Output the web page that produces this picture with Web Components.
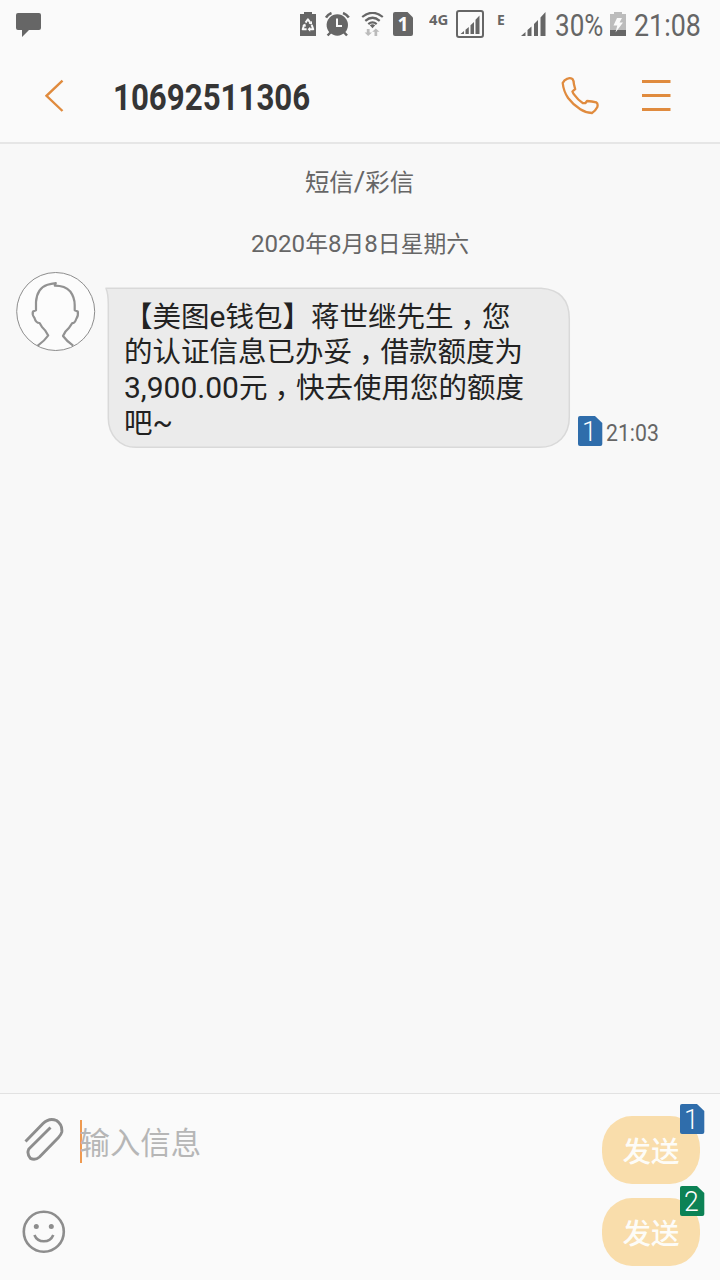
<!DOCTYPE html>
<html lang="zh-CN"><head><meta charset="utf-8"><title>短信</title>
<style>
html,body{margin:0;height:100%;background:#f8f8f8}
body{font-family:Roboto,"Noto Sans CJK SC",sans-serif;overflow:hidden}
</style></head><body>
<message-screen></message-screen>
<script>
const define=(name,html)=>customElements.define(name,class extends HTMLElement{
  constructor(){super();const t=document.createElement('template');t.innerHTML=html;
    this.attachShadow({mode:'open'}).append(t.content.cloneNode(true));}
});

/* Narrow lettering: scales its slot horizontally inside a fixed-width box. */
define('narrow-text',`<style>:host{display:block;width:var(--w);white-space:nowrap;line-height:1}
span{display:inline-block;transform:scaleX(var(--k));transform-origin:0 50%}</style><span><slot></slot></span>`);

/* SIM card badge with a clipped corner. */
define('sim-badge',`<style>:host{display:grid;width:25px;height:30px;color:#fdfdfd;font:350 28px/31px Roboto,sans-serif}
svg,span{grid-area:1/1}path{fill:var(--sim,#2f6dab)}span{text-align:center;transform:translateX(-1px) scaleX(.95)}</style>
<svg width="25" height="30"><path d="M2 0H17L24.3 7V28Q24.3 30 22.3 30H2Q0 30 0 28V2Q0 0 2 0Z"/></svg><span><slot></slot></span>`);

define('status-bar',`<style>
:host{display:flex;height:50px;box-sizing:border-box;padding:0 0 0 16px;color:#666;align-items:flex-start}
svg{display:block;flex:none;fill:#666}
.talk{margin:13px 258px 0 0}
.small{font:bold 14.5px/14px "Open Sans",sans-serif;margin-top:13px}
narrow-text{font-size:31px;margin-top:10px}
#one{width:20px;margin:12px 0 0 -20px;text-align:center;color:#fafafa;font:bold 19.5px/24px "Open Sans",sans-serif}
</style>
<svg class="talk" width="25" height="25" viewBox="0 0 25 25"><path d="M2 0H23Q25 0 25 2V15Q25 17 23 17H13L6 24V17H2Q0 17 0 15V2Q0 0 2 0Z"/></svg>
<svg style="margin:12px 0 0 1px" width="16" height="24" viewBox="0 0 16 24"><path d="M4 0H12V2H16V24H0V2H4Z"/><path d="M5.6 10.6L7.9 7.3L10.2 10.6M4.2 12.9L2.7 17.3H6.6M11.7 12.9L13.2 17.3H9.6" fill="none" stroke="#fafafa" stroke-width="2" stroke-linejoin="round"/><path d="M8.6 11.8L12 8.9V12.6ZM10.2 14.8V19.7L7.6 17.3ZM2.3 13.6L5.2 11.6L6.1 14.8Z" fill="#fafafa"/></svg>
<svg style="margin:12px 0 0 9px" width="25" height="25" viewBox="0 0 25 25"><circle cx="12.3" cy="13" r="10.7"/><path d="M1 5.5Q3 2.3 6.5 1M18 1Q21.5 2.3 23.8 5.5M6 20L2.6 23.5M18.7 20L22 23.5" fill="none" stroke="#666" stroke-width="2.5"/><path d="M12 6.5V14H17" fill="none" stroke="#fafafa" stroke-width="2"/></svg>
<svg style="margin:12px 0 0 11px" width="23" height="25" viewBox="0 0 23 25"><g fill="none" stroke="#666" stroke-width="2.2"><path d="M1.2 5Q11.5-3.4 21.8 5M4.3 8.8Q11.5 2.7 18.7 8.8M7.3 12.2Q11.5 8.6 15.7 12.2"/></g><path d="M8.8 13.2Q11.5 11.3 14.2 13.2L11.5 16.2Z"/><path fill="#bbb" d="M5.8 17H8.6V20.6H11L7.2 24L3.6 20.6H5.8ZM13.5 24H16.2V19.8H18.5L14.8 16.4L11.2 19.8H13.5Z"/></svg>
<svg style="margin:12px 0 0 9px" width="20" height="24" viewBox="0 0 20 24"><path d="M2 0H14.5L20 5.5V22Q20 24 18 24H2Q0 24 0 22V2Q0 0 2 0Z"/></svg>
<b id="one">1</b>
<narrow-text class="small" style="--w:28px;--k:1.03;margin-left:16px">4G</narrow-text>
<svg style="margin:10px 0 0 -1px" width="28" height="28" viewBox="0 0 28 28"><rect x="1" y="1" width="26" height="26" rx="2" fill="none" stroke="#666" stroke-width="2"/><path d="M4.5 24L8 21V24ZM9.5 19.8L12.8 17V24H9.5ZM14.5 15.2L18 12V24H14.5ZM19.5 9.8L23.5 5.5V24H19.5Z"/></svg>
<narrow-text class="small" style="--w:23px;--k:.96;margin-left:13px">E</narrow-text>
<svg style="margin:12px 0 0 1px" width="25" height="24" viewBox="0 0 25 24"><path d="M0 24L4.5 20V24ZM6.5 18L10.5 14.5V24H6.5ZM13 12L17 8V24H13ZM19.5 5.5L24.5 0V24H19.5Z"/></svg>
<narrow-text style="--w:50px;--k:.84;margin-left:9px">30%</narrow-text>
<svg style="margin:12px 0 0 5px" width="16" height="24" viewBox="0 0 16 24"><path fill="#bcbcbc" d="M4 0H12V2H16V18H0V2H4Z"/><path d="M0 18H16V24H0Z"/><path fill="#fafafa" d="M7 6H12L9.5 10.5H13L5.5 20.5L7.3 13.5H3.5Z"/></svg>
<narrow-text style="--w:68px;--k:.865;margin-left:8px">21:08</narrow-text>`);

define('title-bar',`<style>
:host{display:flex;box-sizing:border-box;height:94px;border-bottom:2px solid #e6e6e6;align-items:flex-start}
svg{display:block;fill:none;stroke:#e08b3e;flex:none}
narrow-text{font-size:36px;font-weight:700;color:#353535;margin:30px 0 0 48px;flex:1}
</style>
<svg style="margin:29px 0 0 45px" width="20" height="34" viewBox="0 0 20 34"><path stroke-width="2.4" d="M17.5 1.7L1.5 16.8L17.5 32"/></svg>
<narrow-text style="--w:200px;--k:.868">10692511306</narrow-text>
<svg style="margin:27px 43px 0 0" width="38" height="38" viewBox="0 0 38 38"><path stroke-width="2.3" stroke-linejoin="round" d="M6.5 1.7Q9 .6 11.5 2Q12.7 3.5 12.9 7L14.2 12.2Q12.5 13.5 11.4 14.5Q12 16.5 13.4 17.8Q17 23 22 26.2L24.5 26L26 24Q31 24.2 35.2 25.4Q37.4 26.5 36.2 30.3Q34.5 33.8 31 36Q24 35.5 19.3 32.3Q12 27.6 7.1 21Q2.6 14.5 1.7 6Q3 3 6.5 1.7Z"/></svg>
<svg style="margin:30px 49px 0 0" width="29" height="32" viewBox="0 0 29 32"><path stroke-width="3" d="M0 1.5H28.5M0 15.5H28.5M0 29.5H28.5"/></svg>`);

define('contact-avatar',`<style>:host{display:block;width:80px;height:80px}svg{display:block}</style>
<svg width="80" height="80" viewBox="0 0 80 80"><circle cx="39.7" cy="39.5" r="39" fill="#fcfcfc" stroke="#8d8d8d"/><path fill="none" stroke="#929292" stroke-width="2.2" stroke-linejoin="round" d="M21.5 73.8Q28.5 69 32.2 63.5Q30 58.5 26 55L23.6 51Q19.8 51 18.5 46Q15.8 42.5 17 39.5L20 38.2V30Q21 16 31.5 12.7Q35 11.7 39.8 11.1L38.8 13.7Q49 13.7 54.3 19.5Q58.7 25.5 58.7 33V38.2L61.8 39.5Q62.6 43.5 60.2 47Q59 51.2 56.2 51.2L53 55.8Q49 59 47 64Q51 69.5 57.2 73.6"/></svg>`);

define('message-bubble',`<style>:host{display:grid;width:466px;height:162px;color:#222}
svg,div{grid-area:1/1}
div{padding:12.5px 0 0 19px;font:28.5px/35.5px Roboto,"Noto Sans CJK SC",sans-serif;white-space:nowrap}
::slotted(p){margin:0;height:35.5px}
</style><svg width="466" height="162" viewBox="0 0 466 162"><path fill="#ebebeb" stroke="#d9d9d9" stroke-width="1.5" stroke-linejoin="round" d="M1 1.2H436Q464.3 3 464.3 32V130C464.3 148 453 160.3 434 160.3H31C14 160.3 3.3 147 3.3 131V17Q3.3 7 1 1.2Z"/></svg><div><slot></slot></div>`);

define('send-button',`<style>:host{display:grid;width:103px;height:82px;grid-template-columns:1fr}
button,sim-badge{grid-area:1/1}
button{border:0;padding:0;width:98px;height:68px;margin-top:12px;border-radius:30px/32px;background:#f9ddab;color:#fdfcf8;font:500 28.5px/68px "Noto Sans CJK SC",sans-serif}
sim-badge{justify-self:end;z-index:1}
</style><button>发送</button><sim-badge><slot></slot></sim-badge>`);

define('compose-bar',`<style>
:host{display:flex;box-sizing:border-box;height:187px;border-top:1px solid #e2e2e2;background:#fafafa;padding-top:10px}
svg{display:block;fill:none;stroke:#8d8d8d}
.tools{width:80px}.field{flex:1;display:flex;align-items:center;height:43px;margin-top:16px;border-left:2px solid #ef9a50;color:#b6b6b6;font:400 30.4px/43px "Noto Sans CJK SC",sans-serif}
.field span{margin-left:-2.5px}
.send{margin-right:15px}
</style>
<div class="tools"><svg style="margin:12px 0 0 22px" width="44" height="46" viewBox="0 0 44 46"><path stroke-width="2.9" d="M3.5 25.5L21 7.5Q27.3 1.3 34.5 4.5Q40.5 8.5 39.8 16Q39 19 36.5 21.5L17.5 41Q13 44.8 8.5 42.4Q4.5 38 6.8 33L28.5 11.5"/></svg>
<svg style="margin:48px 0 0 22px" width="44" height="44" viewBox="0 0 44 44"><circle cx="21.8" cy="21.8" r="20" stroke-width="2.6"/><g fill="#8d8d8d" stroke="none"><circle cx="14.3" cy="16.5" r="2.5"/><circle cx="29.3" cy="16.5" r="2.5"/></g><path stroke-width="2.6" d="M12.4 25Q15 31.3 21.8 31.3Q28.6 31.3 31.3 25"/></svg></div>
<div class="field"><span>输入信息</span></div>
<div class="send"><send-button>1</send-button><send-button style="--sim:#0c8255">2</send-button></div>`);

define('message-screen',`<style>
:host{display:flex;flex-direction:column;width:720px;height:1280px;background:#f8f8f8}
header{background:#fafafa;height:144px}
main{flex:1}
.note{color:#666;text-align:center;white-space:nowrap}
.kind{font-size:24.4px;line-height:36px;padding-top:21px;margin-right:1px}
.date{font-size:22.8px;line-height:34px;margin-top:26px}
.date b{font-weight:400;font-size:24.1px}
.kind b{font-weight:400;font-size:28px;line-height:1}
.row{display:flex;margin-top:10px;padding-left:16px}
.row message-bubble{margin:15px 0 0 9px}
p b{font-weight:400;font-size:30px;line-height:1}
i{font-style:normal;margin-left:7px;letter-spacing:-7px}
sim-badge{margin:144px 0 0 7px}
narrow-text{font-size:24px;color:#666;margin:149px 0 0 3px}
</style>
<header><status-bar></status-bar><title-bar></title-bar></header>
<main><div class="note kind">短信<b>/</b>彩信</div>
<div class="note date"><b>2020</b>年<b>8</b>月<b>8</b>日星期六</div>
<section class="row"><contact-avatar></contact-avatar>
<message-bubble><p>【美图<b>e</b>钱包】蒋世继先生<i>，</i>您</p><p>的认证信息已办妥<i>，</i>借款额度为</p><p><b>3,900.00</b>元<i>，</i>快去使用您的额度</p><p>吧<b>~</b></p></message-bubble>
<sim-badge>1</sim-badge><narrow-text style="--w:56px;--k:.885">21:03</narrow-text></section></main>
<compose-bar></compose-bar>`);
</script></body></html>
